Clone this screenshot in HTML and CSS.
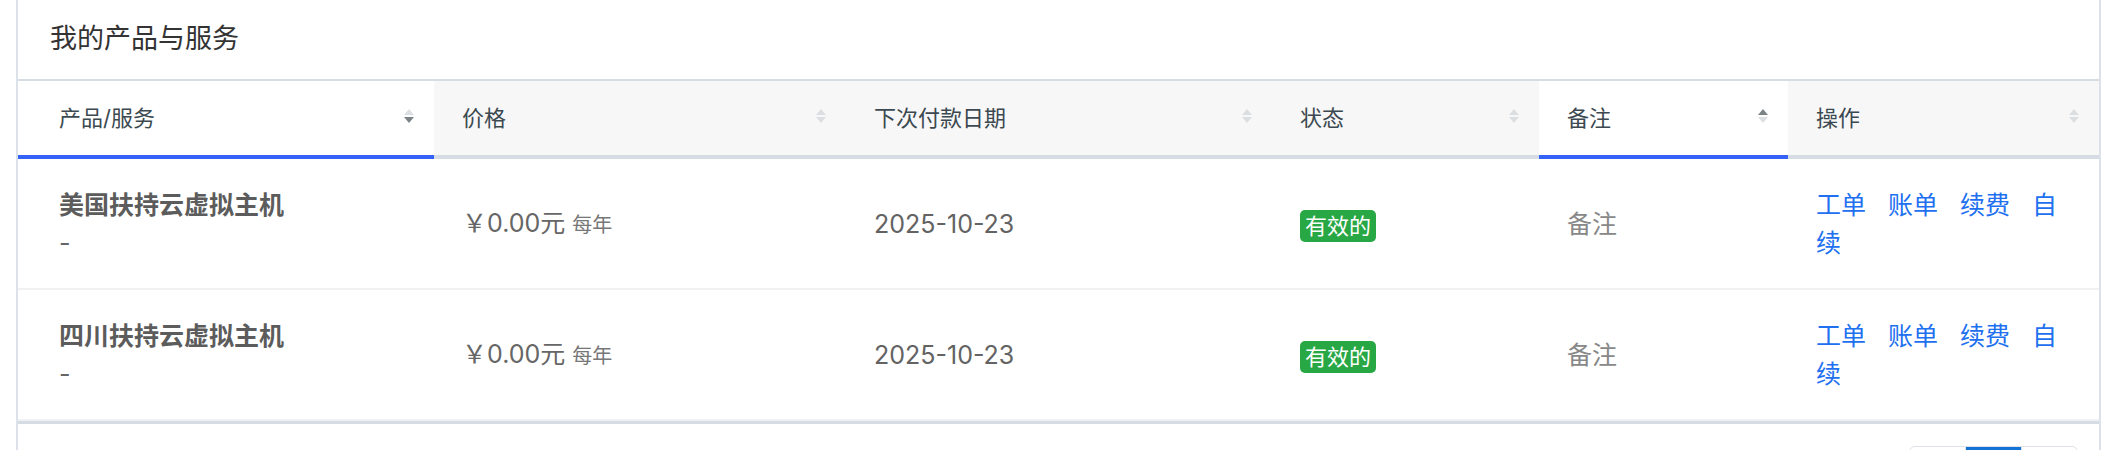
FILE: index.html
```html
<!DOCTYPE html>
<html lang="zh-CN">
<head>
<meta charset="utf-8">
<title>我的产品与服务</title>
<link rel="stylesheet" href="styles.css">
</head>
<body>
<div class="card">
  <div class="card-title">我的产品与服务</div>
  <table class="tbl">
    <colgroup>
      <col class="c-name"><col class="c-price"><col class="c-date"><col class="c-status"><col class="c-note"><col class="c-ops">
    </colgroup>
    <thead>
      <tr>
        <th class="sorted first"><div class="th-in"><span>产品/服务</span><svg class="sort desc" width="10" height="14" viewBox="0 0 10 14"><path class="up" d="M5 0L10 6H0z"/><path class="down" d="M0 8h10L5 14z"/></svg></div></th>
        <th><div class="th-in"><span>价格</span><svg class="sort" width="10" height="14" viewBox="0 0 10 14"><path class="up" d="M5 0L10 6H0z"/><path class="down" d="M0 8h10L5 14z"/></svg></div></th>
        <th><div class="th-in"><span>下次付款日期</span><svg class="sort" width="10" height="14" viewBox="0 0 10 14"><path class="up" d="M5 0L10 6H0z"/><path class="down" d="M0 8h10L5 14z"/></svg></div></th>
        <th><div class="th-in"><span>状态</span><svg class="sort" width="10" height="14" viewBox="0 0 10 14"><path class="up" d="M5 0L10 6H0z"/><path class="down" d="M0 8h10L5 14z"/></svg></div></th>
        <th class="sorted"><div class="th-in"><span>备注</span><svg class="sort asc" width="10" height="14" viewBox="0 0 10 14"><path class="up" d="M5 0L10 6H0z"/><path class="down" d="M0 8h10L5 14z"/></svg></div></th>
        <th><div class="th-in"><span>操作</span><svg class="sort" width="10" height="14" viewBox="0 0 10 14"><path class="up" d="M5 0L10 6H0z"/><path class="down" d="M0 8h10L5 14z"/></svg></div></th>
      </tr>
    </thead>
    <tbody>
      <tr>
        <td class="first"><div class="p-name">美国扶持云虚拟主机</div><div class="p-sub">-</div></td>
        <td><span class="price">￥0.00元</span> <span class="cycle">每年</span></td>
        <td class="date">2025-10-23</td>
        <td><span class="badge">有效的</span></td>
        <td class="note">备注</td>
        <td class="ops"><a href="#">工单</a><a href="#">账单</a><a href="#">续费</a><a href="#">自续</a></td>
      </tr>
      <tr>
        <td class="first"><div class="p-name">四川扶持云虚拟主机</div><div class="p-sub">-</div></td>
        <td><span class="price">￥0.00元</span> <span class="cycle">每年</span></td>
        <td class="date">2025-10-23</td>
        <td><span class="badge">有效的</span></td>
        <td class="note">备注</td>
        <td class="ops"><a href="#">工单</a><a href="#">账单</a><a href="#">续费</a><a href="#">自续</a></td>
      </tr>
    </tbody>
  </table>
  <div class="card-foot">
    <ul class="pager">
      <li class="pg">«</li>
      <li class="pg active">1</li>
      <li class="pg">»</li>
    </ul>
  </div>
</div>
</body>
</html>
```
FILE: styles.css
```css
html, body {
  margin: 0;
  padding: 0;
  background: #ffffff;
}
body {
  font-family: Inter, "Noto Sans CJK SC", sans-serif;
  color: #666666;
}
.card {
  margin: 0 0 0 16px;
  width: 2085px;
  box-sizing: border-box;
  border-left: 2px solid #dde2ea;
  border-right: 2px solid #dde2ea;
  background: #ffffff;
}
.card-title {
  font-size: 27px;
  color: #333333;
  line-height: 77px;
  padding: 0 0 2px 32px;
  border-bottom: 2px solid #d6dce4;
}
.tbl {
  width: 100%;
  table-layout: fixed;
  border-collapse: collapse;
}
.c-name { width: 416px; }
.c-price { width: 412px; }
.c-date { width: 426px; }
.c-status { width: 267px; }
.c-note { width: 249px; }
.c-ops { width: 311px; }
.tbl th {
  background: #f7f7f7;
  font-weight: normal;
  text-align: left;
  font-size: 22px;
  color: #3c4950;
  line-height: 30px;
  padding: 22px 20px 22px 28px;
  border-bottom: 4px solid #d6dce4;
}
.tbl th.sorted {
  background: #ffffff;
  border-bottom-color: #3562f6;
}
.tbl th.first, .tbl td.first {
  padding-left: 41px;
}
.th-in {
  display: flex;
  justify-content: space-between;
  align-items: center;
}
.sort {
  display: block;
  margin-bottom: 4px;
}
.sort .up, .sort .down { fill: #dcdfe2; }
.sort.desc .down { fill: #7b8387; }
.sort.asc .up { fill: #7b8387; }
.tbl td {
  font-size: 25px;
  line-height: 38px;
  padding: 27px 21px 26px 28px;
  vertical-align: middle;
  border-bottom: 2px solid #eff1f3;
}
.p-name {
  font-weight: 700;
  color: #5c5c5c;
}
.p-sub {
  color: #666666;
}
.price {
  color: #666666;
}
.cycle {
  font-size: 20px;
  color: #777777;
}
.date {
  color: #636363;
}
.badge {
  display: inline-block;
  background: #28a745;
  color: #ffffff;
  font-size: 22px;
  line-height: 32px;
  padding: 0 5px;
  border-radius: 5px;
  vertical-align: middle;
}
.note {
  color: #888888;
}
.ops a {
  color: #2170f0;
  text-decoration: none;
  margin-right: 22px;
}
.card-foot {
  border-top: 3px solid #d6dce4;
  padding: 22px 21px 20px;
  display: flex;
  justify-content: flex-end;
}
.pager {
  list-style: none;
  margin: 0;
  padding: 0;
  display: flex;
  border: 1px solid #dee2e6;
  border-radius: 6px;
  overflow: hidden;
}
.pg {
  width: 55px;
  height: 44px;
  line-height: 44px;
  text-align: center;
  font-size: 20px;
  color: #1272d6;
  border-left: 1px solid #dee2e6;
}
.pg:first-child {
  border-left: none;
}
.pg.active {
  background: #1272d6;
  color: #ffffff;
}
```
